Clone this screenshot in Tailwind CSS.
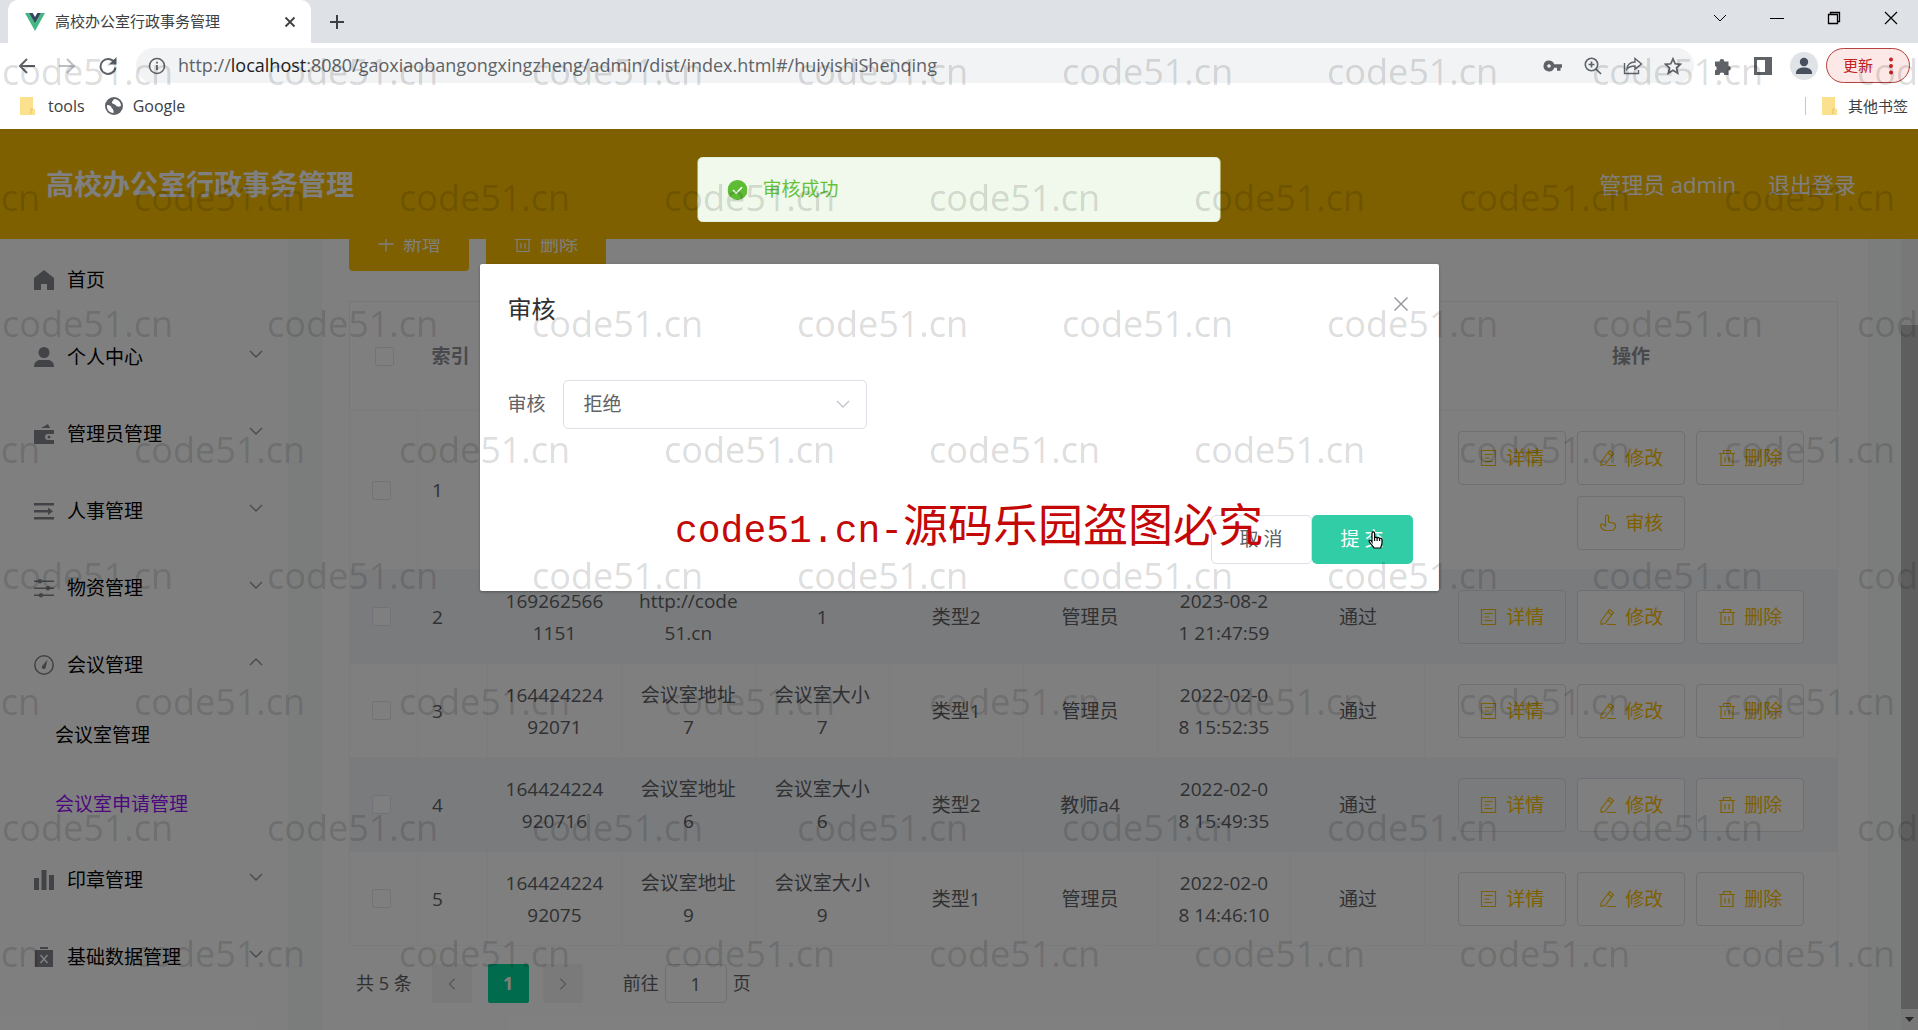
<!DOCTYPE html>
<html lang="zh-CN">
<head>
<meta charset="utf-8">
<title>高校办公室行政事务管理</title>
<script src="https://cdn.jsdelivr.net/npm/@tailwindcss/browser@4"></script>
</head>
<body class="font-['Open_Sans','Noto_Sans_CJK_SC',sans-serif] text-[19px] text-[#606266]">
<svg class="hidden" aria-hidden="true">
  <symbol id="i-down" viewBox="0 0 16 16"><path d="M2 5l6 6 6-6" fill="none" stroke="currentColor" stroke-width="1.3"/></symbol>
  <symbol id="i-folder" viewBox="0 0 16 18"><path d="M0 0h13v12h2v6H0z" fill="#fbe08d"/><path d="M13 12h-2v5" stroke="#e6c25e" fill="none"/></symbol>
  <symbol id="i-detail" viewBox="0 0 18 18"><path d="M1.500 1.500h14v15h-14zM4.500 5.500h8M4.500 9h5M4.500 12.500h8" fill="none" stroke="currentColor" stroke-width="1.200"/></symbol>
  <symbol id="i-edit" viewBox="0 0 18 18"><path d="M2 13L10.500 1.500l4 3L6 15.500l-4 .8zM9 4l4 3M8 16.500h9" fill="none" stroke="currentColor" stroke-width="1.200"/></symbol>
  <symbol id="i-trash" viewBox="0 0 18 18"><path d="M1 4.500h16M5.500 4.500v-3h7v3M3 4.500v12h12v-12M7 8v5.500M11 8v5.500" fill="none" stroke="currentColor" stroke-width="1.200"/></symbol>
  <symbol id="i-pointer" viewBox="0 0 18 18"><path d="M6.500 10V2.500a1.500 1.500 0 0 1 3 0V8l5 1.200c1.500.4 2.200 1.300 2 2.800-.4 3-2 4.500-4.500 4.500H7c-2.500 0-4.500-1.500-5.500-4.500C1 10.500 2.500 9.500 4 10.200L6.500 12z" fill="none" stroke="currentColor" stroke-width="1.200"/></symbol>
</svg>

<div class="relative flex h-screen flex-col overflow-hidden bg-white">

  <!-- Tab strip -->
  <div class="flex h-[43px] shrink-0 items-center bg-[#dee1e6] pl-2 text-[#3c4043]">
    <div class="flex h-full w-[303px] items-center rounded-t-[10px] bg-white pr-[15px] pl-[17px]">
      <svg class="h-[18px] w-5" viewBox="0 0 20 18"><path d="M0 0h4l6 10.500L16 0h4L10 18z" fill="#41b883"/><path d="M4 0h3.700L10 4l2.300-4H16l-6 10.500z" fill="#35495e"/></svg>
      <span class="ml-2.5 text-[15px]">高校办公室行政事务管理</span>
      <button class="ml-auto" aria-label="关闭标签页"><svg class="size-[12px]" viewBox="0 0 12 12"><path d="M1.500 1.500l9 9M10.500 1.500l-9 9" stroke="currentColor" stroke-width="1.800"/></svg></button>
    </div>
    <button class="ml-[18px]" aria-label="新标签页"><svg class="size-4" viewBox="0 0 16 16"><path d="M8 1v14M1 8h14" stroke="currentColor" stroke-width="2"/></svg></button>
    <div class="mr-5 mb-[7px] ml-auto flex items-center gap-[43px] text-black">
      <svg class="size-[14px]" viewBox="0 0 14 14"><path d="M1 4l6 6 6-6" fill="none" stroke="currentColor"/></svg>
      <svg class="size-[14px]" viewBox="0 0 14 14"><path d="M0 7.500h14" stroke="currentColor"/></svg>
      <svg class="size-[14px]" viewBox="0 0 14 14"><path d="M1.500 3.500h9v9h-9zM3.500 3.500v-2h9v9h-2" fill="none" stroke="currentColor" stroke-width="1.300"/></svg>
      <svg class="size-[14px]" viewBox="0 0 14 14"><path d="M1 1l12 12M13 1L1 13" stroke="currentColor" stroke-width="1.200"/></svg>
    </div>
  </div>

  <!-- Address row -->
  <div class="flex h-[45px] shrink-0 items-center pr-2 pl-[18px] text-[#5f6368]">
    <svg class="size-[18px]" viewBox="0 0 18 18"><path d="M17 9H2M9 2L2 9l7 7" fill="none" stroke="currentColor" stroke-width="2"/></svg>
    <svg class="ml-[22px] size-[18px] text-[#bdc1c6]" viewBox="0 0 18 18"><path d="M1 9h15M9 2l7 7-7 7" fill="none" stroke="currentColor" stroke-width="2"/></svg>
    <svg class="ml-[23px] size-[18px]" viewBox="0 0 18 18"><path d="M15.500 5.500A7.500 7.500 0 1 0 16.500 10.500" fill="none" stroke="currentColor" stroke-width="2"/><path d="M17.500 0v7.500H10z" fill="currentColor"/></svg>
    <div class="ml-[19px] flex h-[35px] flex-1 items-center rounded-full bg-[#f1f3f4] pr-3 pl-3">
      <svg class="size-[18px] shrink-0" viewBox="0 0 18 18"><circle cx="9" cy="9" r="7.500" fill="none" stroke="currentColor" stroke-width="1.600"/><path d="M9 8v5M9 4.800v1.800" stroke="currentColor" stroke-width="1.800"/></svg>
      <span class="ml-3 text-[18px] whitespace-nowrap">http://<span class="text-[#202124]">localhost</span>:8080/gaoxiaobangongxingzheng/admin/dist/index.html#/huiyishiShenqing</span>
      <div class="ml-auto flex items-center gap-[21px]">
        <svg class="h-[18px] w-5" viewBox="0 0 20 18"><path d="M6 3.500a5.500 5.500 0 1 0 5.200 7.300H14v3h3.500v-3H19V7.200h-7.800A5.500 5.500 0 0 0 6 3.500zm0 3.700a1.800 1.800 0 1 1 0 3.600 1.800 1.800 0 0 1 0-3.600z" fill="currentColor"/></svg>
        <svg class="size-[18px]" viewBox="0 0 18 18"><path d="M12 12l5 5M7.500 4.500v6M4.500 7.500h6" stroke="currentColor" stroke-width="1.700"/><circle cx="7.500" cy="7.500" r="6.200" fill="none" stroke="currentColor" stroke-width="1.600"/></svg>
        <svg class="h-[18px] w-5" viewBox="0 0 20 18"><path d="M1.500 6v10.500h14V13M4 12c.5-4.500 3.500-7 8-7V1.500l6.500 5.500-6.500 5V9c-3.500 0-6 .7-8 3z" fill="none" stroke="currentColor" stroke-width="1.400"/></svg>
        <svg class="size-[18px]" viewBox="0 0 18 18"><path d="M9 1.800l2.200 5 5.300.5-4 3.500 1.200 5.400L9 13.300l-4.700 2.900 1.200-5.400-4-3.500 5.300-.5z" fill="none" stroke="currentColor" stroke-width="1.700"/></svg>
      </div>
    </div>
    <svg class="ml-5 size-[18px]" viewBox="0 0 18 18"><path d="M1 4.500h4.500a2.400 2.400 0 1 1 4.800 0h4.200V9a2.300 2.300 0 1 1 0 4.600V18h-4.200a2.400 2.400 0 0 0-4.800 0H1v-4.500a2.400 2.400 0 0 0 0-4.600z" fill="currentColor"/></svg>
    <svg class="ml-[22px] size-[18px]" viewBox="0 0 18 18"><path d="M1.500 1.500h15v15h-15z" fill="none" stroke="currentColor" stroke-width="3"/><path d="M11 1h6v16h-6z" fill="currentColor"/></svg>
    <svg class="ml-[18px] size-7" viewBox="0 0 28 28"><circle cx="14" cy="14" r="14" fill="#dfe3e8"/><circle cx="14" cy="10" r="4.200" fill="#46505d"/><path d="M6 21c0-4 4-5.500 8-5.500s8 1.500 8 5.500v1H6z" fill="#46505d"/></svg>
    <button class="ml-2 flex h-[35px] w-[84px] items-center rounded-full border border-[#b3413c] bg-[#fce8e6] pl-4 text-[15px] text-[#c5221f]">更新
      <svg class="ml-4 h-[18px] w-1" viewBox="0 0 4 18"><g fill="currentColor"><circle cx="2" cy="2.500" r="2"/><circle cx="2" cy="9" r="2"/><circle cx="2" cy="15.500" r="2"/></g></svg>
    </button>
  </div>

  <!-- Bookmarks -->
  <div class="flex h-[41px] shrink-0 items-center pr-2.5 pb-[5px] pl-5 text-base text-[#3c4043]">
    <svg class="h-[18px] w-4"><use href="#i-folder"/></svg>
    <a href="#" class="ml-3">tools</a>
    <svg class="ml-5 size-[18px]" viewBox="0 0 18 18"><circle cx="9" cy="9" r="9" fill="#5f6368"/><path d="M2 8c3 0 4 1 4.500 2.500S9 12 8.500 16C4 16 1.500 12 2 8zM9 2c-1 2-2 2-2 3.500S10 7 11 8.500s3 1.500 5 .5C16 5 13 2 9 2z" fill="#fff"/></svg>
    <a href="#" class="ml-2.5">Google</a>
    <span class="mr-4 ml-auto h-[18px] w-px bg-[#c4c7cb]"></span>
    <svg class="h-[18px] w-4"><use href="#i-folder"/></svg>
    <a href="#" class="ml-2.5 text-[15px]">其他书签</a>
  </div>

  <!-- Application -->
  <div class="relative flex flex-1 flex-col overflow-hidden">
    <header class="relative z-10 flex h-[110px] shrink-0 items-center bg-[#ffc000] pr-[62px] pl-[46px] text-[22px] text-white">
      <h1 class="text-[28px] font-bold">高校办公室行政事务管理</h1>
      <span class="ml-auto">管理员 admin</span>
      <a href="#" class="ml-8">退出登录</a>
    </header>

    <div class="flex flex-1">
      <aside class="w-[288px] shrink-0 bg-white text-black">
        <nav id="menu" class="pt-[3px]"></nav>
      </aside>

      <main class="flex-1 bg-[#f7fafa] pr-[33px] pl-[34px]">
        <section class="flow-root h-full bg-white pr-[30px] pl-[27px]">
          <div class="-mt-[22px] mb-[30px] flex gap-[17px]">
            <button class="flex h-[54px] w-[120px] items-center justify-center gap-2 rounded bg-[#ffc000] text-white"><svg class="size-[18px]" viewBox="0 0 18 18"><path d="M9 1.500v15M1.500 9h15" stroke="currentColor" stroke-width="1.300"/></svg>新增</button>
            <button class="flex h-[54px] w-[120px] items-center justify-center gap-2 rounded bg-[#ffc000] text-white"><svg class="size-[18px]"><use href="#i-trash"/></svg>删除</button>
          </div>

          <table class="w-full table-fixed border-collapse border border-[#ebeef5] text-center leading-8">
            <colgroup>
              <col class="w-[68px]"><col class="w-[70px]">
              <col class="w-[9%]"><col class="w-[9%]"><col class="w-[9%]"><col class="w-[9%]"><col class="w-[9%]"><col class="w-[9%]"><col class="w-[9%]">
              <col>
            </colgroup>
            <thead>
              <tr class="h-[109px] border-b border-[#ebeef5] text-[#909399]">
                <th class="pl-0.5"><input type="checkbox" aria-label="全选" class="block mx-auto size-[19px] appearance-none rounded-xs border border-[#e4e7ed] bg-white"></th>
                <th class="pl-3.5 text-left">索引</th>
                <th>申请编号</th><th>会议室地址</th><th>会议室大小</th><th>类型</th><th>申请人</th><th>申请时间</th><th>审核状态</th>
                <th>操作</th>
              </tr>
            </thead>
            <tbody id="rows"></tbody>
          </table>

          <div class="mt-[18px] flex items-center text-[18px]">
            <span class="ml-[7px]">共 5 条</span>
            <button class="ml-5 flex h-[39px] w-10 items-center justify-center rounded-xs bg-[#f4f4f5] text-[#a8abb2]" aria-label="上一页"><svg class="size-[14px] rotate-90"><use href="#i-down"/></svg></button>
            <button class="ml-4 h-[39px] w-[41px] rounded-xs bg-[#00d69a] font-bold text-white">1</button>
            <button class="ml-[14px] flex h-[39px] w-10 items-center justify-center rounded-xs bg-[#f4f4f5] text-[#a8abb2]" aria-label="下一页"><svg class="size-[14px] -rotate-90"><use href="#i-down"/></svg></button>
            <label for="page" class="ml-10">前往</label>
            <input id="page" value="1" class="mx-1.5 h-[39px] w-[62px] rounded border border-[#dcdfe6] bg-white text-center">
            <span>页</span>
          </div>
        </section>
      </main>

      <div class="flex w-[17px] shrink-0 flex-col items-center bg-[#f1f1f1] pt-[86px]">
        <div class="w-full flex-1 bg-[#bdbdbd]"></div>
        <div class="flex h-[21px] items-center"><svg class="h-[5px] w-[9px]" viewBox="0 0 9 5"><path d="M0 0h9L4.500 5z" fill="#505050"/></svg></div>
      </div>
    </div>

    <!-- Dialog -->
    <div class="absolute inset-0 z-20 bg-black/50 pt-[135px]">
      <div role="dialog" aria-label="审核" class="mx-auto w-1/2 rounded-xs bg-white pb-[27px] shadow-[0_1px_3px_rgba(0,0,0,0.3)]">
        <div class="flex items-start justify-between pt-[29px] pr-[31px] pl-7">
          <h2 class="text-[24px] leading-8 text-[#303133]">审核</h2>
          <button aria-label="关闭" class="mt-1 text-[#909399]"><svg class="size-[14px]" viewBox="0 0 14 14"><path d="M.5.500l13 13M13.500.500l-13 13" stroke="currentColor" stroke-width="1.400"/></svg></button>
        </div>
        <div class="mt-[55px] flex items-center pl-7">
          <label for="verdict">审核</label>
          <div class="relative ml-[17px] w-[304px]">
            <select id="verdict" class="h-[49px] w-full appearance-none rounded-[5px] border border-[#dcdfe6] bg-transparent pl-5"><option>通过</option><option selected>拒绝</option></select>
            <svg class="pointer-events-none absolute top-4 right-4 size-4 text-[#c0c4cc]"><use href="#i-down"/></svg>
          </div>
        </div>
        <div class="mt-[86px] flex justify-end pr-[26px]">
          <button class="flex h-[49px] w-[101px] items-center justify-center gap-[5px] rounded-[5px] border border-[#dcdfe6] bg-white"><span>取</span><span>消</span></button>
          <button class="relative flex h-[49px] w-[101px] items-center justify-center gap-[5px] rounded-[5px] bg-[#30cda7] text-white"><span>提</span><span>交</span>
            <svg class="absolute top-4 left-14 h-[18px] w-4" viewBox="0 0 16 18"><path d="M4 11V2.200a1.300 1.300 0 0 1 2.600 0V7c.2-1 2.300-.9 2.500.2.4-.9 2.300-.7 2.500.5.500-.8 2.400-.5 2.400 1V12c0 2-1 3-1.300 5H6C5.500 15 2 12.500 1.200 10.500.7 9 2.500 8.500 4 11zM6.600 7v3M9.100 7.500V10M11.600 8v2" fill="#fff" stroke="#000" stroke-width="1.200"/></svg>
          </button>
        </div>
      </div>
    </div>

    <!-- Result message -->
    <div role="status" class="absolute top-7 left-1/2 z-30 flex h-[65px] w-[523px] -translate-x-1/2 items-center rounded-[5px] border border-[#e1f3d8] bg-[#f0f9eb] pl-[29px] text-[#67c23a]">
      <svg class="size-5" viewBox="0 0 20 20"><circle cx="10" cy="10" r="10" fill="#5dbb34"/><path d="M5.500 10.200l3.200 3 5.800-6" fill="none" stroke="#fff" stroke-width="1.600"/></svg>
      <span class="ml-[15px]">审核成功</span>
    </div>
  </div>

  <!-- Watermarks -->
  <div id="marks" aria-hidden="true" class="pointer-events-none absolute inset-0 z-40 overflow-hidden pt-[9px] text-[36px] text-black/15"></div>
  <div class="pointer-events-none absolute top-[492px] left-[675px] z-50 flex items-baseline text-[45px] leading-[66px] whitespace-nowrap text-[#c40808]"><span class="font-['Liberation_Mono',monospace] text-[38px]">code51.cn-</span><span>源码乐园盗图必究</span></div>
</div>

<script>
const menuIcons = {
  home: '<path d="M10 0L0 8v12h7v-6h6v6h7V8z"/>',
  user: '<circle cx="10" cy="5.500" r="5.500"/><path d="M0 20c0-5 3-7 6-7h8c3 0 6 2 6 7z"/>',
  wallet: '<path d="M0 6h20v4h-6a3 3 0 0 0 0 6h6v4H0zM7 4l7-4 2 4z"/><circle cx="15" cy="13" r="1.500"/>',
  rows: '<path d="M0 2h20v2.500H0zM0 9h14v2.500H0zM0 16h20v2.500H0zM14 6.500l5 3.700-5 3.700z"/>',
  sliders: '<path d="M0 2.500h20v1.500H0zM0 9.500h20V11H0zM0 16.500h20V18H0z"/><circle cx="6" cy="3.200" r="2.200"/><circle cx="14" cy="10.200" r="2.200"/><circle cx="7" cy="17.200" r="2.200"/>',
  gauge: '<circle cx="10" cy="10" r="9.200" fill="none" stroke="currentColor" stroke-width="1.500"/><path d="M13.500 4.500L11.800 12a2 2 0 1 1-3.200-1.500z"/>',
  bars: '<path d="M0 8h5v12H0zM7.500 0h5v20h-5zM15 5h5v15h-5z"/>',
  clip: '<path d="M6 0h8v2H6z"/><path d="M1 3h18v17H1z"/><path d="M6.500 8l7 8M13.500 8l-7 8" stroke="#fff" stroke-width="1.500"/>'
};
const menu = [['home','首页'],['user','个人中心',1],['wallet','管理员管理',1],['rows','人事管理',1],['sliders','物资管理',1],['gauge','会议管理',2],['bars','印章管理',1],['clip','基础数据管理',1]];
document.getElementById('menu').innerHTML = menu.map(([icon, label, state]) => `
  <a href="#" class="flex h-[77px] items-center pr-6 pl-[34px]">
    <svg class="mb-0.5 size-5 text-[#85878c]" viewBox="0 0 20 20" fill="currentColor">${menuIcons[icon]}</svg>
    <span class="ml-[13px]">${label}</span>
    ${state ? `<svg class="${state === 2 ? 'ml-auto mb-2 size-4 rotate-180 text-[#909399]' : 'ml-auto mb-2 size-4 text-[#909399]'}"><use href="#i-down"/></svg>` : ''}
  </a>${state === 2 ? `
  <a href="#" class="flex h-[69px] items-center pb-1.5 pl-[55px]">会议室管理</a>
  <a href="#" class="flex h-[69px] items-center pb-1.5 pl-[55px] text-purple-600">会议室申请管理</a>` : ''}`).join('');

const action = (icon, label, clear) => `<button class="${clear ? 'flex h-[54px] w-[108px] items-center justify-center gap-2 rounded border border-[#dcdfe6] text-[#ffc000]' : 'flex h-[54px] w-[108px] items-center justify-center gap-2 rounded border border-[#dcdfe6] bg-white text-[#ffc000]'}"><svg class="size-[18px]"><use href="#i-${icon}"/></svg>${label}</button>`;
const rows = [
  ['169262569<br>0716','http://code<br>51.cn','1','类型1','管理员','2023-08-2<br>1 21:51:30','未审核'],
  ['169262566<br>1151','http://code<br>51.cn','1','类型2','管理员','2023-08-2<br>1 21:47:59','通过'],
  ['164424224<br>92071','会议室地址<br>7','会议室大小<br>7','类型1','管理员','2022-02-0<br>8 15:52:35','通过'],
  ['164424224<br>920716','会议室地址<br>6','会议室大小<br>6','类型2','教师a4','2022-02-0<br>8 15:49:35','通过'],
  ['164424224<br>92075','会议室地址<br>9','会议室大小<br>9','类型1','管理员','2022-02-0<br>8 14:46:10','通过']
];
document.getElementById('rows').innerHTML = rows.map((cells, i) => `
  <tr class="${i === 0 ? 'h-[159px]' : i % 2 ? 'h-[94px] bg-[#f5f7fa]' : 'h-[94px]'}">
    <td class="border border-[#f5f6f9] pr-1"><input type="checkbox" aria-label="选择第${i + 1}行" class="block mx-auto size-[19px] appearance-none rounded-xs border border-[#e4e7ed] bg-white"></td>
    <td class="border border-[#f5f6f9] pl-3.5 text-left">${i + 1}</td>
    ${cells.map(c => `<td class="border border-[#f5f6f9]">${c}</td>`).join('')}
    <td class="border border-[#f5f6f9]"><div class="flex flex-wrap justify-center gap-[11px]">${action('detail','详情',true)}${action('edit','修改')}${action('trash','删除')}${i === 0 ? action('pointer','审核') : ''}</div></td>
  </tr>`).join('');

document.getElementById('marks').innerHTML = Array.from({length: 8}, (_, r) =>
  `<div class="${r % 2 ? 'flex h-[126px] items-center -ml-[131px]' : 'flex h-[126px] items-center ml-0.5'}">${'<span class="w-[265px] shrink-0">code51.cn</span>'.repeat(8)}</div>`).join('');
</script>
</body>
</html>
